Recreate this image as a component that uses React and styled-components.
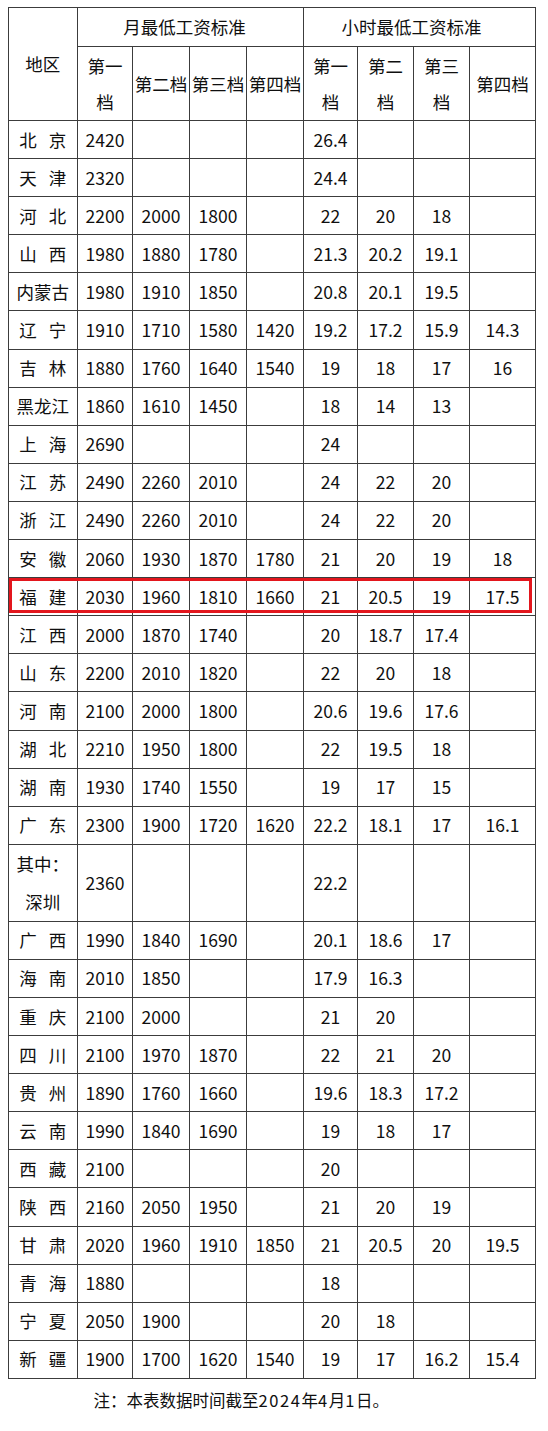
import React from 'react';
import styled, { createGlobalStyle } from 'styled-components';

const Global = createGlobalStyle`
  html, body { margin: 0; padding: 0; background: #fff; }
  body { font-family: "Noto Sans CJK SC", "Noto Sans", sans-serif; color: #0f0f0f; }
`;

const Page = styled.div`
  width: 548px;
  height: 1431px;
  padding: 7px 0 0 7.5px;
  box-sizing: border-box;
  background: #fff;
`;

const TableWrap = styled.div`
  position: relative;
  width: 527.5px;
`;

const Table = styled.table`
  border-collapse: collapse;
  table-layout: fixed;
  width: 527.5px;
  font-size: 17.5px;
  font-weight: 400;
  line-height: 1;
`;

const Cell = styled.td`
  border: 1px solid #3c3c3c;
  text-align: center;
  vertical-align: middle;
  padding: 0;
  height: ${p => p.$h}px;
  line-height: ${p => p.$lh || 20}px;
  white-space: nowrap;
  padding-right: ${p => p.$pr || 0}px;
`;

const Head = styled(Cell).attrs({ as: 'th' })`
  font-weight: 400;
`;

const NameSpaced = styled.span`
  display: inline-flex;
  gap: 12px;
`;

const Highlight = styled.div`
  position: absolute;
  left: 1.5px;
  right: 3px;
  top: 571px;
  height: 35px;
  border: 3px solid #e3161d;
  box-sizing: border-box;
  pointer-events: none;
`;

const Note = styled.div`
  padding: 9px 0 0 86px;
  font-size: 16.5px;
  line-height: 24px;
  color: #0f0f0f;
`;

const NoteNum = styled.span`
  letter-spacing: 1.6px;
`;

const widths = [69.5, 55, 57, 57, 57, 54, 56, 56, 66];
const ROW_H = 37.1;

const rows = [
  ['北京', '2420', '', '', '', '26.4', '', '', ''],
  ['天津', '2320', '', '', '', '24.4', '', '', ''],
  ['河北', '2200', '2000', '1800', '', '22', '20', '18', ''],
  ['山西', '1980', '1880', '1780', '', '21.3', '20.2', '19.1', ''],
  ['内蒙古', '1980', '1910', '1850', '', '20.8', '20.1', '19.5', ''],
  ['辽宁', '1910', '1710', '1580', '1420', '19.2', '17.2', '15.9', '14.3'],
  ['吉林', '1880', '1760', '1640', '1540', '19', '18', '17', '16'],
  ['黑龙江', '1860', '1610', '1450', '', '18', '14', '13', ''],
  ['上海', '2690', '', '', '', '24', '', '', ''],
  ['江苏', '2490', '2260', '2010', '', '24', '22', '20', ''],
  ['浙江', '2490', '2260', '2010', '', '24', '22', '20', ''],
  ['安徽', '2060', '1930', '1870', '1780', '21', '20', '19', '18'],
  ['福建', '2030', '1960', '1810', '1660', '21', '20.5', '19', '17.5'],
  ['江西', '2000', '1870', '1740', '', '20', '18.7', '17.4', ''],
  ['山东', '2200', '2010', '1820', '', '22', '20', '18', ''],
  ['河南', '2100', '2000', '1800', '', '20.6', '19.6', '17.6', ''],
  ['湖北', '2210', '1950', '1800', '', '22', '19.5', '18', ''],
  ['湖南', '1930', '1740', '1550', '', '19', '17', '15', ''],
  ['广东', '2300', '1900', '1720', '1620', '22.2', '18.1', '17', '16.1'],
  ['其中：|深圳', '2360', '', '', '', '22.2', '', '', ''],
  ['广西', '1990', '1840', '1690', '', '20.1', '18.6', '17', ''],
  ['海南', '2010', '1850', '', '', '17.9', '16.3', '', ''],
  ['重庆', '2100', '2000', '', '', '21', '20', '', ''],
  ['四川', '2100', '1970', '1870', '', '22', '21', '20', ''],
  ['贵州', '1890', '1760', '1660', '', '19.6', '18.3', '17.2', ''],
  ['云南', '1990', '1840', '1690', '', '19', '18', '17', ''],
  ['西藏', '2100', '', '', '', '20', '', '', ''],
  ['陕西', '2160', '2050', '1950', '', '21', '20', '19', ''],
  ['甘肃', '2020', '1960', '1910', '1850', '21', '20.5', '20', '19.5'],
  ['青海', '1880', '', '', '', '18', '', '', ''],
  ['宁夏', '2050', '1900', '', '', '20', '18', '', ''],
  ['新疆', '1900', '1700', '1620', '1540', '19', '17', '16.2', '15.4'],
];

function RegionName({ name }) {
  if (name.includes('|')) {
    const [a, b] = name.split('|');
    return (<>{a}<br />{b}</>);
  }
  if (name.length === 2) {
    return (
      <NameSpaced>
        <span>{name[0]}</span>
        <span>{name[1]}</span>
      </NameSpaced>
    );
  }
  return name;
}

export default function App() {
  return (
    <Page>
      <Global />
      <TableWrap>
        <Table>
          <colgroup>
            {widths.map((w, i) => <col key={i} style={{ width: w }} />)}
          </colgroup>
          <thead>
            <tr>
              <Head rowSpan={2} $h={38}>地区</Head>
              <Head colSpan={4} $h={38} $pr={12}>月最低工资标准</Head>
              <Head colSpan={4} $h={38} $pr={16}>小时最低工资标准</Head>
            </tr>
            <tr>
              <Head $h={73} $lh={36}>第一<br />档</Head>
              <Head $h={73}>第二档</Head>
              <Head $h={73}>第三档</Head>
              <Head $h={73}>第四档</Head>
              <Head $h={73} $lh={36}>第一<br />档</Head>
              <Head $h={73} $lh={36}>第二<br />档</Head>
              <Head $h={73} $lh={36}>第三<br />档</Head>
              <Head $h={73}>第四档</Head>
            </tr>
          </thead>
          <tbody>
            {rows.map((r, i) => {
              const double = r[0].includes('|');
              const h = double ? ROW_H * 2 + 1 : ROW_H;
              return (
                <tr key={i}>
                  <Cell $h={h} $lh={double ? 38 : 20}><RegionName name={r[0]} /></Cell>
                  {r.slice(1).map((v, j) => <Cell key={j} $h={h}>{v}</Cell>)}
                </tr>
              );
            })}
          </tbody>
        </Table>
        <Highlight />
      </TableWrap>
      <Note>
        注：本表数据时间截至<NoteNum>2024</NoteNum>年<NoteNum>4</NoteNum>月<NoteNum>1</NoteNum>日。
      </Note>
    </Page>
  );
}
